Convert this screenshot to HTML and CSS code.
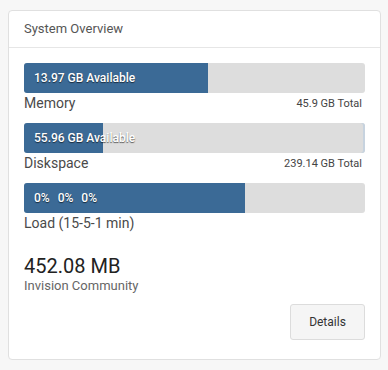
FILE: index.html
```html
<!DOCTYPE html>
<html lang="en">
<head>
    <meta charset="UTF-8">
    <meta name="viewport" content="width=device-width, initial-scale=1.0">
    <title>System Overview</title>
    <link rel="stylesheet" href="styles.css">
</head>
<body>
    <div class="widget">
        <h2 class="widget-title">System Overview</h2>
        <div class="widget-body">
            <div class="stat">
                <div class="bar">
                    <div class="bar-fill" style="width: 54%"></div>
                    <span class="bar-text">13.97 GB Available</span>
                </div>
                <div class="stat-row">
                    <span class="stat-name">Memory</span>
                    <span class="stat-total">45.9 GB Total</span>
                </div>
            </div>
            <div class="stat">
                <div class="bar bar-disk">
                    <div class="bar-fill" style="width: 23.2%"></div>
                    <span class="bar-text">55.96 GB Available</span>
                </div>
                <div class="stat-row">
                    <span class="stat-name">Diskspace</span>
                    <span class="stat-total">239.14 GB Total</span>
                </div>
            </div>
            <div class="stat">
                <div class="bar">
                    <div class="bar-fill" style="width: 64.8%"></div>
                    <span class="bar-text"><span class="load">0%</span><span class="load">0%</span><span class="load">0%</span></span>
                </div>
                <div class="stat-row">
                    <span class="stat-name">Load (15-5-1 min)</span>
                </div>
            </div>
            <div class="size">
                <div class="size-value">452.08 MB</div>
                <div class="size-label">Invision Community</div>
            </div>
            <div class="actions">
                <button class="details-button">Details</button>
            </div>
        </div>
    </div>
</body>
</html>
```

FILE: styles.css
```css
:root {
    --bar-color: #3b6a96;
    --bar-empty: #dddddd;
    --border-color: #e0e0e0;
    --text-color: #444444;
}

* {
    margin: 0;
    padding: 0;
    box-sizing: border-box;
}

body {
    font-family: Roboto, 'Liberation Sans', sans-serif;
    background: #f7f7f7;
    color: var(--text-color);
    padding: 10px 7px 9px 8px;
}

.widget {
    background: #ffffff;
    border: 1px solid var(--border-color);
    border-radius: 4px;
}

.widget-title {
    font-size: 13px;
    font-weight: normal;
    color: #555555;
    line-height: 36px;
    padding: 0 15px;
    border-bottom: 1px solid #e6e6e6;
}

.widget-body {
    padding: 15px 15px 19px 15px;
}

.stat {
    margin-bottom: 10px;
}

.bar {
    position: relative;
    height: 30px;
    background: var(--bar-empty);
    border-radius: 3px;
    overflow: hidden;
}

.bar-disk {
    box-shadow: inset -2px 0 0 #c7d3df;
}

.bar-fill {
    height: 100%;
    background: var(--bar-color);
}

.bar-text {
    position: absolute;
    left: 10px;
    top: 0;
    line-height: 30px;
    font-size: 12px;
    font-weight: 500;
    color: #ffffff;
    text-shadow: 0 1px 1px rgba(0, 0, 0, 0.6);
    white-space: nowrap;
}

.load {
    margin-right: 8px;
}

.stat-row {
    display: flex;
    justify-content: space-between;
    align-items: center;
    height: 20px;
}

.stat-name {
    font-size: 14px;
    color: #4a4a4a;
}

.stat-total {
    font-size: 11px;
    color: #444444;
    padding-right: 3px;
}

.size {
    margin-top: 22px;
}

.size-value {
    font-size: 20px;
    line-height: 23px;
    color: #222222;
}

.size-label {
    font-size: 13px;
    line-height: 16px;
    color: #666666;
}

.actions {
    display: flex;
    justify-content: flex-end;
    margin-top: 10px;
}

.details-button {
    font-family: inherit;
    font-size: 12px;
    color: #333333;
    background: #f5f5f5;
    border: 1px solid #dcdcdc;
    border-radius: 3px;
    width: 75px;
    height: 36px;
}
```
